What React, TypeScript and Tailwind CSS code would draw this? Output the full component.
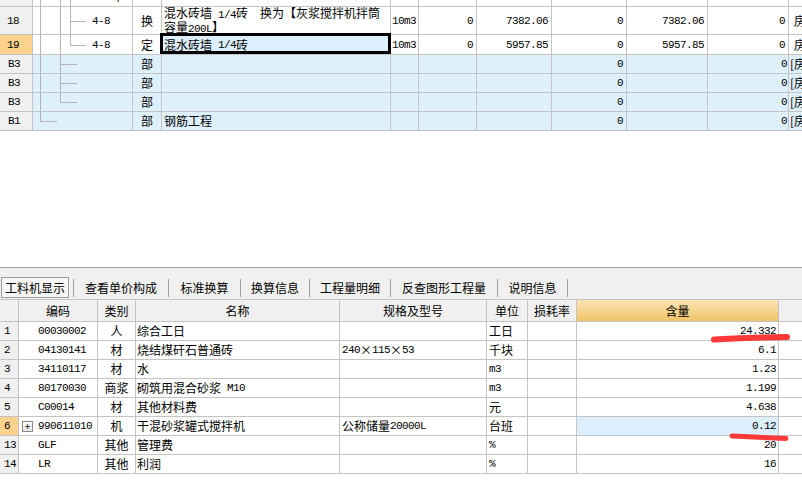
import React from "react";

// grid colours
const G = "border-[#c4c4c4]";
const MONO = "font-['Liberation_Mono',monospace] text-[11px] tracking-[-0.6px]";
const HEAD_BG = "bg-[#f0f0f0]";
const HL_BG = "bg-[#fdd28c]";
const BLUE = "bg-[#dff0fd]";

// splits ascii runs out so they get the narrow half-width look
function T({ s }: { s: string }) {
  const parts = s.split(/([\x20-\x7e]+)/).filter(Boolean);
  return (
    <>
      {parts.map((p, i) =>
        /^[\x20-\x7e]+$/.test(p) ? (
          <span key={i} className={MONO}>
            {p}
          </span>
        ) : (
          <span key={i}>{p}</span>
        ),
      )}
    </>
  );
}

function C({
  w,
  className = "",
  children,
}: {
  w: string;
  className?: string;
  children?: React.ReactNode;
}) {
  return (
    <div
      className={`${w} shrink-0 border-r border-b ${G} flex items-center overflow-hidden whitespace-pre leading-[14px] ${className}`}
    >
      {children}
    </div>
  );
}

function Last({ className = "", children }: { className?: string; children?: React.ReactNode }) {
  return (
    <div
      className={`flex-1 min-w-0 border-b ${G} flex items-center overflow-hidden whitespace-pre leading-[14px] ${className}`}
    >
      {children}
    </div>
  );
}

const VL: Record<number, string> = { 7: "left-[7px]", 27: "left-[27px]", 37: "left-[37px]" };

// tree connector lines inside the code column
function Tree({
  v,
  h,
}: {
  v: Array<[number, "full" | "top"]>;
  h?: [number, string];
}) {
  return (
    <>
      {v.map(([l, k], i) => (
        <span
          key={i}
          className={`absolute ${VL[l]} top-0 w-px bg-[#b4b4b4] ${k === "full" ? "bottom-0" : "h-1/2"}`}
        />
      ))}
      {h && <span className={`absolute ${VL[h[0]]} top-1/2 h-px ${h[1]} bg-[#b4b4b4]`} />}
    </>
  );
}

const TW = [
  "w-[33px]",
  "w-[100px]",
  "w-[29px]",
  "w-[229px]",
  "w-[28px]",
  "w-[58px]",
  "w-[75px]",
  "w-[75px]",
  "w-[81px]",
  "w-[81px]",
];

function TopTable() {
  const bRows = [
    { no: "B3", tree: <Tree v={[[7, "full"], [27, "full"]]} h={[27, "w-[17px]"]} />, name: "" },
    { no: "B3", tree: <Tree v={[[7, "full"], [27, "full"]]} h={[27, "w-[17px]"]} />, name: "" },
    { no: "B3", tree: <Tree v={[[7, "full"], [27, "top"]]} h={[27, "w-[17px]"]} />, name: "" },
    { no: "B1", tree: <Tree v={[[7, "top"]]} h={[7, "w-[17px]"]} />, name: "钢筋工程" },
  ];

  return (
    <div className="h-[267px] overflow-hidden bg-white">
      {/* partially scrolled row */}
      <div className="flex h-[20px] -mt-[13px]">
        <C w={TW[0]} className={HEAD_BG} />
        <C w={TW[1]} className="relative">
          <Tree v={[[7, "full"], [27, "full"], [37, "full"]]} />
          <span className={`ml-[53px] ${MONO}`}>1.05L,</span>
        </C>
        <C w={TW[2]} />
        <C w={TW[3]} className="pl-[2px]">
          <span className={MONO}>0.</span>
        </C>
        {TW.slice(4).map((w, i) => (
          <C key={i} w={w} />
        ))}
        <Last />
      </div>

      {/* 18 */}
      <div className="flex h-[28px]">
        <C w={TW[0]} className={`${HEAD_BG} pl-[7px]`}>
          <span className={MONO}>18</span>
        </C>
        <C w={TW[1]} className="relative">
          <Tree v={[[7, "full"], [27, "full"], [37, "full"]]} h={[37, "w-[16px]"]} />
          <span className={`ml-[59px] ${MONO}`}>4-8</span>
        </C>
        <C w={TW[2]} className="justify-center">换</C>
        <C w={TW[3]} className="pl-[2px]">
          <div className="leading-[11px] whitespace-pre">
            <T s="混水砖墙 1/4砖  换为【灰浆搅拌机拌筒" />
            <br />
            <T s="容量200L】" />
          </div>
        </C>
        <C w={TW[4]} className="pl-[1px]">
          <span className={MONO}>10m3</span>
        </C>
        <C w={TW[5]} className="justify-end pr-[3px]"><span className={MONO}>0</span></C>
        <C w={TW[6]} className="justify-end pr-[3px]"><span className={MONO}>7382.06</span></C>
        <C w={TW[7]} className="justify-end pr-[3px]"><span className={MONO}>0</span></C>
        <C w={TW[8]} className="justify-end pr-[3px]"><span className={MONO}>7382.06</span></C>
        <C w={TW[9]} className="justify-end pr-[3px]"><span className={MONO}>0</span></C>
        <Last className="pl-[5px]">房屋建筑与装饰工程</Last>
      </div>

      {/* 19 - selected */}
      <div className="flex h-[20px]">
        <C w={TW[0]} className={`${HL_BG} pl-[7px]`}>
          <span className={MONO}>19</span>
        </C>
        <C w={TW[1]} className="relative">
          <Tree v={[[7, "full"], [27, "full"], [37, "top"]]} h={[37, "w-[16px]"]} />
          <span className={`ml-[59px] ${MONO}`}>4-8</span>
        </C>
        <C w={TW[2]} className="justify-center">定</C>
        <C w={TW[3]} className="relative !overflow-visible bg-[#ddeefc] pl-[2px]">
          <T s="混水砖墙 1/4砖" />
          <span className="absolute -top-[2px] -left-[2px] -right-[1px] bottom-0 border-[3px] border-black" />
        </C>
        <C w={TW[4]} className="pl-[1px]">
          <span className={MONO}>10m3</span>
        </C>
        <C w={TW[5]} className="justify-end pr-[3px]"><span className={MONO}>0</span></C>
        <C w={TW[6]} className="justify-end pr-[3px]"><span className={MONO}>5957.85</span></C>
        <C w={TW[7]} className="justify-end pr-[3px]"><span className={MONO}>0</span></C>
        <C w={TW[8]} className="justify-end pr-[3px]"><span className={MONO}>5957.85</span></C>
        <C w={TW[9]} className="justify-end pr-[3px]"><span className={MONO}>0</span></C>
        <Last className="pl-[5px]">房屋建筑与装饰工程</Last>
      </div>

      {bRows.map((r, i) => (
        <div key={i} className="flex h-[19px]">
          <C w={TW[0]} className={`${HEAD_BG} pl-[8px]`}>
            <span className={MONO}>{r.no}</span>
          </C>
          <C w={TW[1]} className={`relative ${BLUE}`}>{r.tree}</C>
          <C w={TW[2]} className={`justify-center ${BLUE}`}>部</C>
          <C w={TW[3]} className={`${BLUE} pl-[2px]`}>{r.name}</C>
          <C w={TW[4]} className={BLUE} />
          <C w={TW[5]} className={BLUE} />
          <C w={TW[6]} className={BLUE} />
          <C w={TW[7]} className={`justify-end pr-[3px] ${BLUE}`}><span className={MONO}>0</span></C>
          <C w={TW[8]} className={BLUE} />
          <C w={TW[9]} className={`justify-end pr-[1px] ${BLUE}`}><span className={MONO}>0</span></C>
          <Last className={`${BLUE} pl-px`}>[房屋建筑与装饰工程</Last>
        </div>
      ))}
    </div>
  );
}

const TABS = [
  { label: "查看单价构成", w: "w-[94px]" },
  { label: "标准换算", w: "w-[71px]" },
  { label: "换算信息", w: "w-[68px]" },
  { label: "工程量明细", w: "w-[80px]" },
  { label: "反查图形工程量", w: "w-[106px]" },
  { label: "说明信息", w: "w-[69px]" },
];

function Tabs() {
  return (
    <div className="h-[31px] bg-[#f0f0f0] flex items-end pb-px">
      <div className="flex items-center h-[21px]">
        <div className="ml-px w-[68px] h-[21px] border border-[#9c9c9c] bg-[#f7f7f7] flex items-center pl-[3px] leading-none">
          工料机显示
        </div>
        <span className="ml-[4px] w-px h-[18px] bg-[#a0a0a0]" />
        {TABS.map((t) => (
          <React.Fragment key={t.label}>
            <div className={`${t.w} text-center leading-none`}>{t.label}</div>
            <span className="w-px h-[18px] bg-[#a0a0a0]" />
          </React.Fragment>
        ))}
      </div>
    </div>
  );
}

const BW = ["w-[19px]", "w-[79px]", "w-[38px]", "w-[204px]", "w-[147px]", "w-[41px]", "w-[49px]", "w-[202px]"];

const ITEMS = [
  { no: "1", code: "00030002", kind: "人", name: "综合工日", spec: "", unit: "工日", qty: "24.332" },
  { no: "2", code: "04130141", kind: "材", name: "烧结煤矸石普通砖", spec: "240×115×53", unit: "千块", qty: "6.1" },
  { no: "3", code: "34110117", kind: "材", name: "水", spec: "", unit: "m3", qty: "1.23" },
  { no: "4", code: "80170030", kind: "商浆", name: "砌筑用混合砂浆 M10", spec: "", unit: "m3", qty: "1.199" },
  { no: "5", code: "C00014", kind: "材", name: "其他材料费", spec: "", unit: "元", qty: "4.638" },
  { no: "6", code: "990611010", kind: "机", name: "干混砂浆罐式搅拌机", spec: "公称储量20000L", unit: "台班", qty: "0.12", sel: true },
  { no: "13", code: "GLF", kind: "其他", name: "管理费", spec: "", unit: "%", qty: "20" },
  { no: "14", code: "LR", kind: "其他", name: "利润", spec: "", unit: "%", qty: "16" },
];

function BottomTable() {
  const heads = ["", "编码", "类别", "名称", "规格及型号", "单位", "损耗率"];
  return (
    <div>
      <div className={`flex h-[23px] border-t ${G} ${HEAD_BG}`}>
        {heads.map((h, i) => (
          <C key={i} w={BW[i]} className="justify-center">
            {h}
          </C>
        ))}
        <C w={BW[7]} className="justify-center bg-linear-to-b from-[#fbe4b3] to-[#f1c466]">
          含量
        </C>
        <Last />
      </div>
      {ITEMS.map((r) => (
        <div key={r.no} className="flex h-[19px]">
          <C w={BW[0]} className={`${r.sel ? HL_BG : HEAD_BG} pl-[4px]`}>
            <span className={MONO}>{r.no}</span>
          </C>
          <C w={BW[1]} className={r.sel ? "pl-[3px]" : "pl-[19px]"}>
            {r.sel && (
              <span className="mr-[5px] w-[11px] h-[11px] border border-[#8a8a8a] bg-linear-to-b from-white to-[#e4e4e4] flex items-center justify-center text-[10px] leading-none">
                +
              </span>
            )}
            <span className={MONO}>{r.code}</span>
          </C>
          <C w={BW[2]} className="justify-center">{r.kind}</C>
          <C w={BW[3]} className="pl-[1px]"><T s={r.name} /></C>
          <C w={BW[4]} className="pl-[2px]"><T s={r.spec} /></C>
          <C w={BW[5]} className="pl-[2px]"><T s={r.unit} /></C>
          <C w={BW[6]} />
          <C w={BW[7]} className={`justify-end pr-[2px] ${r.sel ? "bg-[#ddeefc]" : ""}`}>
            <span className={MONO}>{r.qty}</span>
          </C>
          <Last />
        </div>
      ))}
    </div>
  );
}

export default function App() {
  return (
    <div className="relative w-[802px] h-[481px] overflow-hidden bg-white text-black text-[12px] font-['Noto_Sans_CJK_SC','Noto_Sans',sans-serif]">
      <TopTable />
      <div className="h-px bg-[#a0a0a0]" />
      <Tabs />
      <BottomTable />

      {/* red pen marks on the screenshot */}
      <svg className="absolute inset-0 pointer-events-none" width="802" height="481" viewBox="0 0 802 481">
        <path d="M714 339.5 Q 750 337.5 787 337" stroke="#ff3838" strokeWidth="6" strokeLinecap="round" fill="none" />
        <path d="M732 436 Q 760 437.5 786 438.5" stroke="#ff3838" strokeWidth="5" strokeLinecap="round" fill="none" />
      </svg>
    </div>
  );
}
